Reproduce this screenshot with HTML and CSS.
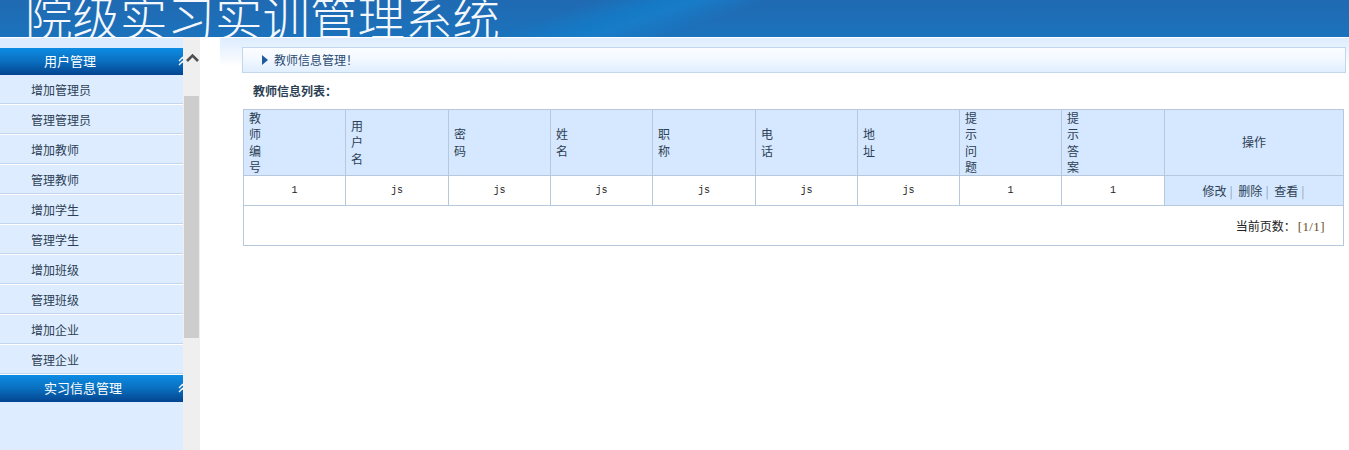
FILE: index.html
```html
<!DOCTYPE html>
<html lang="zh-CN">
<head>
<meta charset="utf-8">
<title>院级实习实训管理系统</title>
<link rel="stylesheet" href="styles.css">
</head>
<body>
<header class="top"><h1 class="brand">院级实习实训管理系统</h1></header>
<div class="layout">
  <aside class="side">
    <nav class="menu">
      <div class="group"><span class="group-name">用户管理</span><svg class="dbl" width="9" height="10" viewBox="0 0 9 10"><path d="M1 5l3.500-3.500L8 5M1 9l3.500-3.500L8 9" fill="none" stroke="#fff" stroke-width="1.300"/></svg></div>
      <a class="item">增加管理员</a>
      <a class="item">管理管理员</a>
      <a class="item">增加教师</a>
      <a class="item">管理教师</a>
      <a class="item">增加学生</a>
      <a class="item">管理学生</a>
      <a class="item">增加班级</a>
      <a class="item">管理班级</a>
      <a class="item">增加企业</a>
      <a class="item">管理企业</a>
      <div class="group"><span class="group-name">实习信息管理</span><svg class="dbl" width="9" height="10" viewBox="0 0 9 10"><path d="M1 5l3.500-3.500L8 5M1 9l3.500-3.500L8 9" fill="none" stroke="#fff" stroke-width="1.300"/></svg></div>
    </nav>
    <div class="scrollbar">
      <svg class="arrow" width="13" height="9" viewBox="0 0 13 9"><path d="M1 8l5.500-5.500L12 8" fill="none" stroke="#505050" stroke-width="2.600"/></svg>
      <div class="thumb"></div>
    </div>
  </aside>
  <main class="main">
    <div class="crumb"><svg class="tri" width="6" height="10" viewBox="0 0 6 10"><path d="M0 0l6 5-6 5z" fill="#1f5a9c"/></svg><span class="crumb-text">教师信息管理！</span></div>
    <h2 class="list-title">教师信息列表：</h2>
    <table class="grid">
      <colgroup>
        <col class="c1"><col class="c2"><col class="c3"><col class="c4"><col class="c5"><col class="c6"><col class="c7"><col class="c8"><col class="c9"><col>
      </colgroup>
      <tr>
        <th>教<br>师<br>编<br>号</th>
        <th>用<br>户<br>名</th>
        <th>密<br>码</th>
        <th>姓<br>名</th>
        <th>职<br>称</th>
        <th>电<br>话</th>
        <th>地<br>址</th>
        <th>提<br>示<br>问<br>题</th>
        <th>提<br>示<br>答<br>案</th>
        <th class="center">操作</th>
      </tr>
      <tr class="data">
        <td>1</td><td>js</td><td>js</td><td>js</td><td>js</td><td>js</td><td>js</td><td>1</td><td>1</td>
        <td class="ops"><a>修改</a><i>|</i> <a>删除</a><i>|</i> <a>查看</a><i>|</i></td>
      </tr>
      <tr class="pager">
        <td colspan="10">当前页数：<span class="pages">[1/1]</span></td>
      </tr>
    </table>
  </main>
</div>
</body>
</html>
```
FILE: styles.css
```css
* { box-sizing: border-box; }
html, body { margin: 0; height: 450px; overflow: hidden; background: #fff; }
body { font-family: "Noto Sans CJK SC", "Liberation Sans", sans-serif; font-size: 12px; color: #2d3f55; }

.top {
  height: 37px;
  overflow: hidden;
  background:
    linear-gradient(161deg, rgba(22,124,200,0) 41%, #157ac6 46%, #187cc8 48%, rgba(22,124,200,0) 53%),
    linear-gradient(#206ab2, #1b72bc);
}
.brand {
  margin: 0;
  padding-left: 25px;
  height: 37px;
  font-size: 47.500px;
  font-weight: 300;
  line-height: 32px;
  color: #f4f8fc;
  white-space: nowrap;
}

.layout { display: flex; height: 413px; }

.side { width: 200px; flex: none; display: flex; }
.menu {
  width: 183px;
  flex: none;
  border-top: 1px solid #fff;
  padding-top: 10px;
  background: #ddedff;
}
.group {
  height: 27px;
  display: flex;
  align-items: center;
  overflow: hidden;
  color: #fff;
  font-size: 13px;
  background: linear-gradient(#0c8ce4, #0a6fbf 50%, #03448f);
}
.group-name { padding-left: 44px; flex: 1; padding-bottom: 2px; }
.dbl { flex: none; margin-right: -4px; margin-top: -2px; }
.item {
  display: block;
  height: 30px;
  line-height: 30px;
  padding-left: 31px;
  font-size: 12px;
  color: #2d3f55;
  border-bottom: 1px solid #fff;
  box-shadow: inset 0 -1px 0 #c2d6ee;
}

.scrollbar { width: 17px; flex: none; background: #efefef; display: flex; flex-direction: column; padding-left: 1px; }
.arrow { margin: 16px 0 0 2px; }
.thumb { width: 15px; height: 242px; margin-top: 34px; background: #cdcdcd; }

.main {
  flex: 1;
  margin-left: 20px;
  padding: 10px 3px 0 22px;
  background: linear-gradient(#fff 1px, #ddecfe 1px, #fff 30px);
}
.crumb {
  height: 26px;
  border: 1px solid #c2d6ee;
  background: linear-gradient(#fbfdff, #f4f9ff 40%, #e0eefe);
  display: flex;
  align-items: center;
  padding-left: 19px;
  color: #2a4a72;
  font-size: 12px;
}
.tri { margin-right: 6px; }
.crumb-text { padding-bottom: 2px; }
.list-title {
  margin: 9px 0 0 11px;
  height: 27px;
  font-size: 12px;
  font-weight: 700;
  line-height: 18px;
  color: #2d3f55;
}

.grid {
  width: 1101px;
  margin-left: 1px;
  table-layout: fixed;
  border-collapse: collapse;
  border: 1px solid #b8c8dc;
}
.grid th, .grid td { border: 1px solid #b8c8dc; padding: 0; }
.c1 { width: 102px; } .c2 { width: 103px; } .c3 { width: 102px; } .c4 { width: 102px; }
.c5 { width: 103px; } .c6 { width: 102px; } .c7 { width: 102px; } .c8 { width: 102px; } .c9 { width: 103px; }
.grid th {
  height: 66px;
  background: #d5e8ff;
  font-weight: 400;
  font-size: 12px;
  line-height: 16.250px;
  text-align: left;
  padding-left: 5px;
  color: #2d3f55;
}
.grid th.center { text-align: center; padding-left: 0; }
.data td {
  height: 30px;
  text-align: center;
  font-family: "Liberation Mono", monospace;
  font-size: 10px;
  color: #222;
}
.data .ops {
  background: #d5e8ff;
  font-family: "Noto Sans CJK SC", sans-serif;
  font-size: 12px;
  color: #2d3f55;
  padding-left: 2px;
}
.ops i { font-style: normal; color: #8fa3bb; margin: 0 3px 0 3px; }
.pager td {
  height: 40px;
  text-align: right;
  padding-right: 18px;
  font-size: 12px;
  color: #222;
}
.pages { font-family: "Liberation Serif", serif; font-size: 13px; letter-spacing: 0.400px; margin-left: 2px; color: #6b4a1e; }
```
